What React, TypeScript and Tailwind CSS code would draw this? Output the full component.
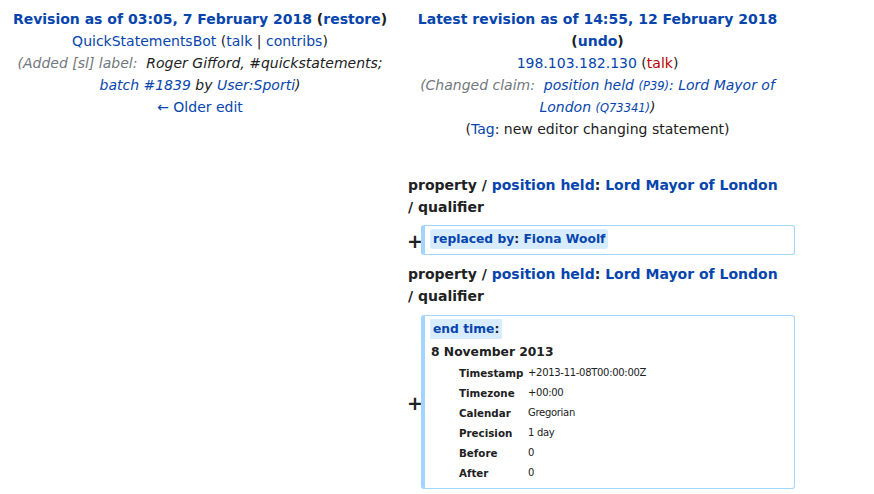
import React from "react";

const L = "text-[#0645ad]";

export default function App() {
  const rows = [
    ["Timestamp", "+2013-11-08T00:00:00Z"],
    ["Timezone", "+00:00"],
    ["Calendar", "Gregorian"],
    ["Precision", "1 day"],
    ["Before", "0"],
    ["After", "0"],
  ];
  return (
    <div
      className="w-[874px] h-[494px] bg-white text-[#202122] text-[14px] overflow-hidden"
      style={{ fontFamily: '"DejaVu Sans", sans-serif' }}
    >
      <div className="flex w-[795px]">
        {/* Left column */}
        <div className="w-[400px] pt-[8px] text-center leading-[22px]">
          <div className="font-bold">
            <span className={L}>Revision as of 03:05, 7 February 2018</span> (<span className={L}>restore</span>)
          </div>
          <div>
            <span className={L}>QuickStatementsBot</span> (<span className={L}>talk</span> | <span className={L}>contribs</span>)
          </div>
          <div className="italic">
            <span className="text-[#72777d]">(Added [sl] label:&nbsp;</span> Roger Gifford, #quickstatements;
            <br />
            <span className={L}>batch #1839</span> by <span className={L}>User:Sporti</span>)
          </div>
          <div>
            <span className={L}>← Older edit</span>
          </div>
        </div>
        {/* Right column */}
        <div className="w-[395px] flex flex-col">
          <div className="pt-[8px] text-center leading-[22px]">
            <div className="font-bold">
              <span className={L}>Latest revision as of 14:55, 12 February 2018</span>
              <br />(<span className={L}>undo</span>)
            </div>
            <div>
              <span className={L}>198.103.182.130</span> (<span className="text-[#ba0000]">talk</span>)
            </div>
            <div className="italic">
              <span className="text-[#72777d]">(Changed claim:&nbsp;</span>{" "}
              <span className={L}>
                position held <span className="text-[11.5px] leading-[10px]">(P39)</span>: Lord Mayor of
                <br />
                London <span className="text-[11.5px] leading-[10px]">(Q73341)</span>
              </span>
              )
            </div>
            <div>
              (<span className={L}>Tag</span>: new editor changing statement)
            </div>
          </div>

          <div className="mt-[34px] pl-[8px] leading-[22px] font-bold">
            property / <span className={L}>position held</span>: <span className={L}>Lord Mayor of London</span>
            <br />/ qualifier
          </div>
          <div className="flex items-center mt-[7px]">
            <div className="w-[21px] text-center font-bold text-[19px] leading-none pl-[7px] pt-[2px]">+</div>
            <div className="flex-1 h-[30px] border border-[#a3d3ff] border-l-4 rounded-[3px] pl-[5px] pt-[3px] text-[12.3px]">
              <span className={`inline-block bg-[#d8ecff] rounded-[3px] px-[3px] leading-[20px] font-bold ${L}`}>
                replaced by<span className="text-[#202122]">:</span> Fiona Woolf
              </span>
            </div>
          </div>
          <div className="mt-[8px] pl-[8px] leading-[22px] font-bold">
            property / <span className={L}>position held</span>: <span className={L}>Lord Mayor of London</span>
            <br />/ qualifier
          </div>
          <div className="flex items-center mt-[8px]">
            <div className="w-[21px] text-center font-bold text-[19px] leading-none pl-[7px] pt-[2px]">+</div>
            <div className="flex-1 h-[174px] border border-[#a3d3ff] border-l-4 rounded-[3px] pl-[5px] pt-[3px] text-[12.3px]">
              <span className={`inline-block bg-[#d8ecff] px-[3px] leading-[20px] font-bold ${L}`}>
                end time<span className="text-[#202122]">:</span>
              </span>
              <div className="font-bold pl-[1px] pt-[1px] leading-[24px]">8 November 2013</div>
              <table className="ml-[29px] -mt-[1px] leading-[20px] border-collapse">
                <tbody>
                  {rows.map(([k, v]) => (
                    <tr key={k}>
                      <td className="font-bold p-0 w-[69px] text-[10.3px]">{k}</td>
                      <td className="p-0 text-[10px] tracking-[-0.3px]">{v}</td>
                    </tr>
                  ))}
                </tbody>
              </table>
            </div>
          </div>
        </div>
      </div>
    </div>
  );
}
